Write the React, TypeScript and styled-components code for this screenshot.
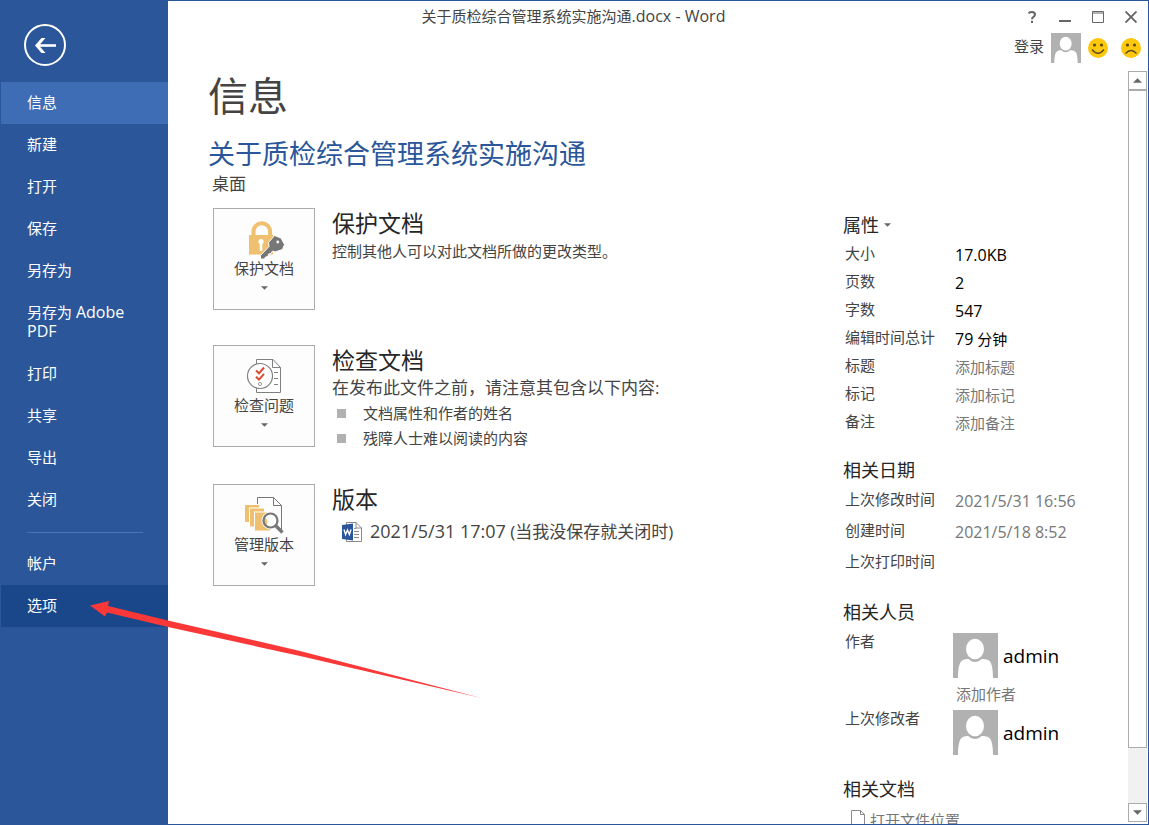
import React from "react";
import styled, { createGlobalStyle } from "styled-components";

const GlobalStyle = createGlobalStyle`
  *, *::before, *::after { box-sizing: border-box; }
  body {
    margin: 0;
    background: #fff;
    color: #444;
    font-family: "Open Sans", "Noto Sans CJK SC", sans-serif;
    font-size: 15px;
    line-height: 20px;
  }
  h1, h2, h3, p, ul, dl, dd { margin: 0; padding: 0; font-weight: 400; }
  button {
    font: inherit;
    color: inherit;
    background: none;
    border: 0;
    padding: 0;
    cursor: pointer;
  }
  svg { display: block; flex: none; }
`;

const Window = styled.div`
  position: relative;
  display: flex;
  height: 100vh;
  overflow: hidden;
  border: 1px solid #2b579a;
  border-left: 0;
`;

/* Navigation */
const Sidebar = styled.nav`
  flex: none;
  width: 168px;
  padding-left: 1px;
  background: #2b579a;
  color: #fff;
`;

const BackButton = styled.button`
  display: block;
  margin: 23px 0 16px 23px;
`;

const NavItem = styled.button<{ $tone?: string }>`
  display: block;
  width: 100%;
  padding: 11px 36px 12px 26px;
  line-height: 19px;
  text-align: left;
  background: ${(p) => p.$tone ?? "transparent"};
`;

const NavDivider = styled.hr`
  height: 1px;
  margin: 11px 25px 10px 26px;
  border: 0;
  background: #4a74b5;
`;

/* Latin letters are set one size up beside Chinese text. */
const Latin = styled.span<{ $size?: number }>`
  font-size: ${(p) => p.$size ?? 16}px;
`;

/* Main pane */
const Main = styled.main`
  flex: 1;
  min-width: 0;
  display: flex;
  flex-direction: column;
`;

const TitleBar = styled.header`
  display: flex;
  flex: none;
  height: 32px;
  padding-right: 1px;
`;

const WindowTitle = styled.div`
  flex: 1;
  padding-top: 5px;
  text-align: center;
  white-space: nowrap;
`;

const WindowControls = styled.div`
  display: flex;
  justify-content: flex-end;
  width: 168px;
`;

const IconButton = styled.button`
  display: flex;
  align-items: center;
  justify-content: center;
  width: 33px;
  height: 32px;
  color: #666;
`;

const AccountBar = styled.div`
  display: flex;
  flex: none;
  align-items: center;
  justify-content: flex-end;
  height: 30px;
  padding-right: 1px;
`;

const SignIn = styled.button`
  margin-right: 7px;
  padding-bottom: 4px;
`;

const ScrollPane = styled.div`
  flex: 1;
  min-height: 0;
  display: flex;
`;

const Content = styled.div`
  flex: 1;
  min-width: 0;
  overflow: hidden;
  padding: 5px 0 0 40px;
`;

const PageTitle = styled.h1`
  font-size: 40px;
  line-height: 56px;
`;

const DocTitle = styled.h2`
  margin-top: 12px;
  color: #2b579a;
  font-size: 27px;
  line-height: 36px;
`;

const DocPath = styled.p`
  padding-left: 4px;
  font-size: 17px;
  line-height: 24px;
`;

const Columns = styled.div`
  display: flex;
  margin-top: 12px;
`;

const Actions = styled.div`
  flex: 1;
  min-width: 0;
  display: flex;
  flex-direction: column;
  gap: 33px;
  padding-left: 5px;
`;

const Action = styled.section`
  display: flex;
  gap: 17px;
  min-height: 104px;
`;

const TileButton = styled.button`
  display: flex;
  flex: none;
  flex-direction: column;
  align-items: center;
  width: 102px;
  height: 102px;
  padding-top: 11px;
  border: 1px solid #ababab;
  background: #fdfdfd;

  svg + span { margin-bottom: 10px; line-height: 16px; }
`;

const ActionTitle = styled.h3`
  color: #262626;
  font-size: 23px;
  line-height: 30px;
`;

const ActionText = styled.p<{ $large?: boolean }>`
  font-size: ${(p) => (p.$large ? 17 : 15)}px;
  line-height: 26px;
`;

const BulletList = styled.ul`
  list-style: none;
  line-height: 25px;
`;

const Bullet = styled.li`
  display: flex;
  align-items: center;
  gap: 17px;
  padding-left: 5px;

  &::before {
    content: "";
    width: 9px;
    height: 9px;
    background: #b1b1b1;
  }
`;

const VersionLink = styled.button`
  display: flex;
  align-items: center;
  gap: 8px;
  padding: 4px 0 0 10px;
  font-size: 17px;
  line-height: 26px;
  white-space: nowrap;
`;

/* Document properties */
const Properties = styled.aside`
  flex: none;
  width: 285px;
  padding-top: 4px;
`;

const GroupTitle = styled.h3`
  display: flex;
  align-items: center;
  gap: 5px;
  color: #262626;
  font-size: 18px;
  line-height: 26px;
`;

const PropertyList = styled.dl<{ $row: number }>`
  display: grid;
  grid-template-columns: 110px 1fr;
  grid-auto-rows: ${(p) => p.$row}px;
  margin: 1px 0 22px;
  padding-left: 2px;
  line-height: ${(p) => p.$row}px;
`;

const Value = styled.dd<{ $muted?: boolean }>`
  padding-top: 2px;
  color: ${(p) => (p.$muted ? "#777" : "#000")};
`;

const PeopleList = styled.dl`
  display: grid;
  grid-template-columns: 108px 1fr;
  margin: 8px 0 21px;
  padding-left: 2px;
`;

const PersonLabel = styled.dt`
  line-height: 16px;
`;

const Person = styled.div`
  display: flex;
  align-items: center;
  gap: 5px;
  color: #000;
  font-size: 19px;
`;

const AddAuthor = styled.button`
  display: block;
  padding: 6px 0 6px 3px;
  color: #777;
`;

const FileLink = styled.button`
  display: flex;
  align-items: flex-start;
  gap: 5px;
  padding: 8px 0 0 8px;
  color: #777;
`;

/* Scroll bar */
const ScrollBar = styled.div`
  display: flex;
  flex: none;
  flex-direction: column;
  width: 19px;
  margin: 8px 1px 2px 0;
  background: #f1f1f1;
`;

const ScrollArrow = styled.button`
  display: flex;
  align-items: center;
  justify-content: center;
  height: 19px;
  border: 1px solid #ababab;
  background: #fff;
`;

const ScrollThumb = styled.div`
  height: 658px;
  flex: 0 1 auto;
  border: 1px solid #ababab;
  background: #fff;
`;

const ScrollTrack = styled.div`
  flex: 1 0 55px;
`;

const Annotation = styled.svg`
  position: absolute;
  left: 90px;
  top: 599px;
  pointer-events: none;
`;

const Triangle = ({ color = "#666", size = 7, up = false }) => (
  <svg width={size} height={Math.ceil(size / 2)} viewBox="0 0 8 4" aria-hidden="true">
    <path d={up ? "M0 4L4 0L8 4Z" : "M0 0H8L4 4Z"} fill={color} />
  </svg>
);

const Avatar = ({ size }: { size: number }) => (
  <svg width={size} height={size} viewBox="0 0 45 45" aria-hidden="true">
    <rect width="45" height="45" fill="#b1b1b1" />
    <ellipse cx="22" cy="16" rx="9" ry="10.3" fill="#fff" />
    <path d="M5 45C5 37 6 30 8.500 28C11 26 14 26 15.500 26C19 30 25 30 28.500 26C30 26 34 26 36.500 28C39 30 40 37 40 45Z" fill="#fff" />
  </svg>
);

const Face = ({ sad = false }) => (
  <svg width="20" height="20" viewBox="0 0 20 20" aria-hidden="true">
    <circle cx="10" cy="10" r="10" fill="#fdc70c" />
    <circle cx="6.500" cy="7" r="1.600" fill="#5b4a1e" />
    <circle cx="13.500" cy="7" r="1.600" fill="#5b4a1e" />
    <path
      d={sad ? "M4.500 15.500Q10 9.500 15.500 15.500" : "M4 11.500Q10 19 16 11.500"}
      fill="none"
      stroke="#5b4a1e"
      strokeWidth="1.300"
    />
  </svg>
);

const LockIcon = () => (
  <svg width="44" height="40" viewBox="-4 0 44 40" aria-hidden="true">
    <path d="M7.500 16V11.500A8.300 8.300 0 0 1 24.100 11.500V16" fill="none" stroke="#eec06f" strokeWidth="4" />
    <rect x="3" y="15" width="24" height="19.500" fill="#eec06f" />
    <circle cx="15" cy="21.500" r="2.600" fill="#fff" />
    <path d="M13.700 22H16.300V31H13.700Z" fill="#fff" />
    <path
      d="M28.500 15.500L35 18L38.500 24.500L36.500 29.500L29 32L26.500 31L25 33.500L22.500 34L22 36.500L19.500 37L18.500 39H14.500V35.500L23 26.500L22.500 22.500Z"
      fill="#777"
      stroke="#fff"
      strokeWidth="1"
    />
    <circle cx="31.800" cy="22" r="1.400" fill="#fff" />
  </svg>
);

const InspectIcon = () => (
  <svg width="44" height="40" viewBox="-4 0 44 40" fill="none" aria-hidden="true">
    <path d="M10.500 35.500V2.500H27L34.500 10.500V35.500ZM26.500 2.500V10.500H34.500" fill="#fff" stroke="#808080" />
    <path d="M28 15.500H32M28 21.500H32M28 27.500H32" stroke="#808080" />
    <circle cx="14" cy="19" r="12.500" fill="#fff" stroke="#808080" strokeWidth="1.200" />
    <path d="M10 13.500L13 16.300L18 10.500M10 19.800L13 22.600L18 16.800" stroke="#dc4a32" strokeWidth="2" />
    <circle cx="14" cy="27" r="1.600" stroke="#999" />
  </svg>
);

const VersionsIcon = () => (
  <svg width="44" height="40" viewBox="-4 0 44 40" fill="none" aria-hidden="true">
    <path d="M11.500 9V1.500H27.500L35.500 9.500V35M27.500 1.500V9.500H35.500" stroke="#777" />
    <g fill="#eec06f" stroke="#fdfdfd">
      <rect x="-1.500" y="8.500" width="15" height="18" />
      <rect x="3.500" y="12" width="15" height="19" />
      <rect x="8.500" y="16" width="16" height="19" />
    </g>
    <circle cx="24.500" cy="24.500" r="9" fill="#fdfdfd" />
    <path d="M19 20.500A7 7 0 0 0 20 30Q23 26 19 20.500Z" fill="#eec06f" />
    <circle cx="24.500" cy="24.500" r="7" stroke="#777" strokeWidth="2.200" />
    <path d="M29.500 29.500L36.500 36.500" stroke="#777" strokeWidth="3.400" />
  </svg>
);

const WordFileIcon = () => (
  <svg width="20" height="22" viewBox="0 0 20 22" fill="none" aria-hidden="true">
    <path d="M4.500 1.500H14L19.500 7V20.500H4.500Z" fill="#fff" stroke="#8a8a8a" />
    <path d="M14 1.500V7H19.500" stroke="#8a8a8a" />
    <path d="M12 7.500H14M12 10.500H17M12 13.500H17M12 16.500H17" stroke="#8a8a8a" />
    <path d="M0 4L11 2.500V19.500L0 18Z" fill="#2b579a" />
    <path d="M2 8.500L3.600 13.500L5.500 9L7.400 13.500L9 8.500" stroke="#fff" strokeWidth="1.400" />
  </svg>
);

const navTop = ["新建", "打开", "保存", "另存为"];
const navBottom = ["打印", "共享", "导出", "关闭"];

const facts: { label: string; value: React.ReactNode; add?: boolean }[] = [
  { label: "大小", value: <Latin>17.0KB</Latin> },
  { label: "页数", value: <Latin>2</Latin> },
  { label: "字数", value: <Latin>547</Latin> },
  { label: "编辑时间总计", value: <><Latin>79</Latin> 分钟</> },
  { label: "标题", value: "添加标题", add: true },
  { label: "标记", value: "添加标记", add: true },
  { label: "备注", value: "添加备注", add: true },
];

const dates = [
  { label: "上次修改时间", value: "2021/5/31 16:56" },
  { label: "创建时间", value: "2021/5/18 8:52" },
  { label: "上次打印时间", value: "" },
];

export default function App() {
  return (
    <>
      <GlobalStyle />
      <Window>
        <Sidebar>
          <BackButton aria-label="返回">
            <svg width="42" height="42" viewBox="0 0 42 42" fill="none" stroke="#fff">
              <circle cx="21" cy="21" r="20" strokeWidth="2" />
              <path d="M32 21.500H13" strokeWidth="2.600" />
              <path d="M21.500 14H17.500L11 21.500L17.500 29H21.500L15 21.500Z" fill="#fff" stroke="none" />
            </svg>
          </BackButton>
          <NavItem $tone="#3e6db5">信息</NavItem>
          {navTop.map((n) => <NavItem key={n}>{n}</NavItem>)}
          <NavItem>另存为 <Latin>Adobe PDF</Latin></NavItem>
          {navBottom.map((n) => <NavItem key={n}>{n}</NavItem>)}
          <NavDivider />
          <NavItem>帐户</NavItem>
          <NavItem $tone="#194789">选项</NavItem>
        </Sidebar>

        <Main>
          <TitleBar>
            <WindowTitle>关于质检综合管理系统实施沟通<Latin>.docx - Word</Latin></WindowTitle>
            <WindowControls>
              <IconButton aria-label="帮助">
                <svg width="10" height="12" viewBox="0 0 10 12" fill="none" stroke="currentColor" strokeWidth="2">
                  <path d="M1.500 2.200Q3 1 5 1Q8 1 8 3.500Q8 5 6.500 5.800Q5 6.700 5 8.300M5 9.700V12" />
                </svg>
              </IconButton>
              <IconButton aria-label="最小化">
                <svg width="12" height="12" viewBox="0 0 12 12"><path d="M0 9H12V11H0Z" fill="currentColor" /></svg>
              </IconButton>
              <IconButton aria-label="最大化">
                <svg width="12" height="12" viewBox="0 0 12 12" fill="none" stroke="currentColor">
                  <path d="M0.500 0.500H11.500V11.500H0.500ZM0 2H12" />
                </svg>
              </IconButton>
              <IconButton aria-label="关闭窗口">
                <svg width="12" height="12" viewBox="0 0 12 12" fill="none" stroke="currentColor" strokeWidth="1.900">
                  <path d="M0.500 0.500L11.500 11.500M11.500 0.500L0.500 11.500" />
                </svg>
              </IconButton>
            </WindowControls>
          </TitleBar>
          <AccountBar>
            <SignIn>登录</SignIn>
            <Avatar size={30} />
            <IconButton aria-label="微笑"><Face /></IconButton>
            <IconButton aria-label="哭脸"><Face sad /></IconButton>
          </AccountBar>

          <ScrollPane>
            <Content>
              <PageTitle>信息</PageTitle>
              <DocTitle>关于质检综合管理系统实施沟通</DocTitle>
              <DocPath>桌面</DocPath>
              <Columns>
                <Actions>
                  <Action>
                    <TileButton><LockIcon /><span>保护文档</span><Triangle /></TileButton>
                    <div>
                      <ActionTitle>保护文档</ActionTitle>
                      <ActionText>控制其他人可以对此文档所做的更改类型。</ActionText>
                    </div>
                  </Action>
                  <Action>
                    <TileButton><InspectIcon /><span>检查问题</span><Triangle /></TileButton>
                    <div>
                      <ActionTitle>检查文档</ActionTitle>
                      <ActionText $large>在发布此文件之前，请注意其包含以下内容:</ActionText>
                      <BulletList>
                        <Bullet>文档属性和作者的姓名</Bullet>
                        <Bullet>残障人士难以阅读的内容</Bullet>
                      </BulletList>
                    </div>
                  </Action>
                  <Action>
                    <TileButton><VersionsIcon /><span>管理版本</span><Triangle /></TileButton>
                    <div>
                      <ActionTitle>版本</ActionTitle>
                      <VersionLink>
                        <WordFileIcon />
                        <span><Latin $size={18}>2021/5/31 17:07</Latin> (当我没保存就关闭时)</span>
                      </VersionLink>
                    </div>
                  </Action>
                </Actions>

                <Properties>
                  <GroupTitle>属性 <Triangle /></GroupTitle>
                  <PropertyList $row={28}>
                    {facts.map((f) => (
                      <React.Fragment key={f.label}>
                        <dt>{f.label}</dt>
                        <Value $muted={f.add}>{f.add ? <button>{f.value}</button> : f.value}</Value>
                      </React.Fragment>
                    ))}
                  </PropertyList>
                  <GroupTitle>相关日期</GroupTitle>
                  <PropertyList $row={31}>
                    {dates.map((d) => (
                      <React.Fragment key={d.label}>
                        <dt>{d.label}</dt>
                        <Value $muted><Latin>{d.value}</Latin></Value>
                      </React.Fragment>
                    ))}
                  </PropertyList>
                  <GroupTitle>相关人员</GroupTitle>
                  <PeopleList>
                    <PersonLabel>作者</PersonLabel>
                    <dd>
                      <Person><Avatar size={45} />admin</Person>
                      <AddAuthor>添加作者</AddAuthor>
                    </dd>
                    <PersonLabel>上次修改者</PersonLabel>
                    <dd><Person><Avatar size={45} />admin</Person></dd>
                  </PeopleList>
                  <GroupTitle>相关文档</GroupTitle>
                  <FileLink>
                    <svg width="14" height="18" viewBox="0 0 14 18" fill="#fff" stroke="#8a8a8a" aria-hidden="true">
                      <path d="M0.500 0.500H9.500L13.500 4.500V17.500H0.500ZM9.500 0.500V4.500H13.500" />
                    </svg>
                    打开文件位置
                  </FileLink>
                </Properties>
              </Columns>
            </Content>
            <ScrollBar>
              <ScrollArrow aria-label="向上滚动"><Triangle size={9} up /></ScrollArrow>
              <ScrollThumb />
              <ScrollTrack />
              <ScrollArrow aria-label="向下滚动"><Triangle size={9} /></ScrollArrow>
            </ScrollBar>
          </ScrollPane>
        </Main>

        <Annotation width="392" height="100" viewBox="0 0 392 100" aria-hidden="true">
          <path d="M0 5.500L19 1L18 6L78 20.500L210 51L391.500 98L210 56L78 27L17 12.500L15 16.500Z" fill="#fb3838" />
        </Annotation>
      </Window>
    </>
  );
}
